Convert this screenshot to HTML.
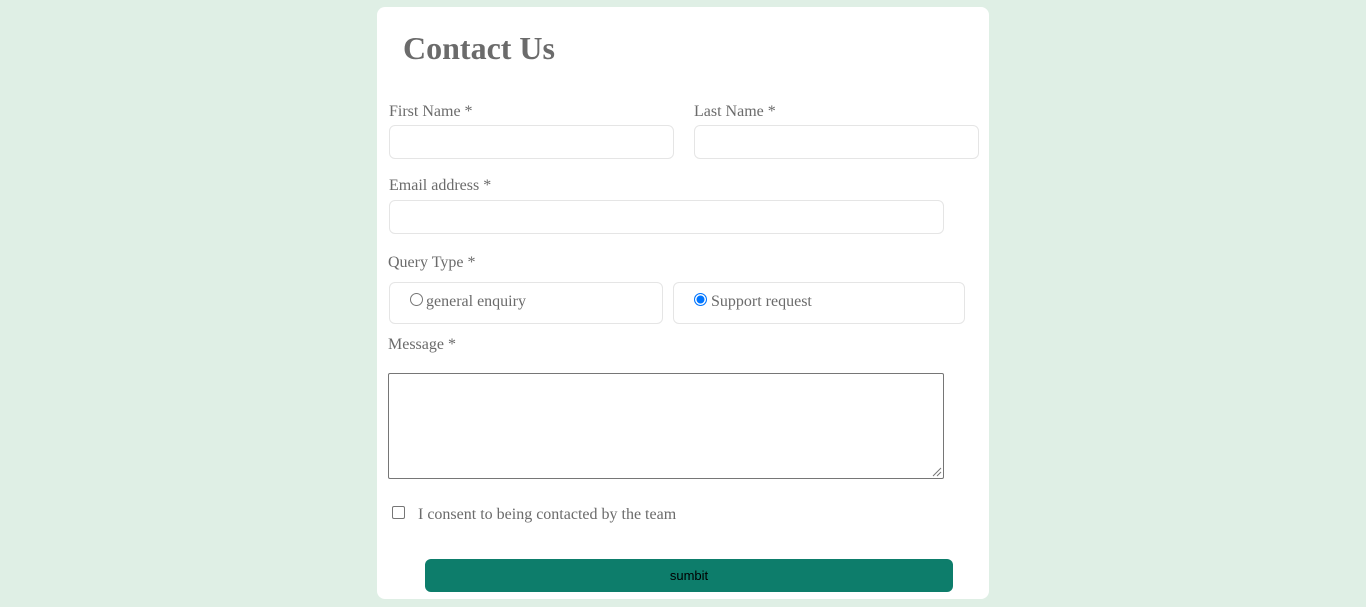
<!DOCTYPE html>
<html><head><meta charset="utf-8"><style>
html,body{margin:0;padding:0;width:1366px;height:607px;background:#dfefe5;overflow:hidden;font-family:"Liberation Serif",serif;color:#6b6b6b}
.card{position:absolute;left:377px;top:7px;width:612px;height:592px;background:#fff;border-radius:8px}
.a{position:absolute}
h1{position:absolute;left:403px;top:30px;margin:0;font-size:32px;font-weight:bold;color:#6b6b6b;line-height:36px}
.l{position:absolute;font-size:16px;line-height:18px}
.in{position:absolute;border:1px solid #e5e5e5;border-radius:6px;background:#fff;box-sizing:border-box}
.radio{position:absolute;width:13px;height:13px;border-radius:50%;box-sizing:border-box}
</style></head><body>
<div class="card"></div>
<h1>Contact Us</h1>
<div class="l" style="left:389px;top:103px">First Name *</div>
<div class="l" style="left:694px;top:103px">Last Name *</div>
<div class="in" style="left:389px;top:125px;width:285px;height:34px"></div>
<div class="in" style="left:694px;top:125px;width:285px;height:34px"></div>
<div class="l" style="left:389px;top:177px">Email address *</div>
<div class="in" style="left:389px;top:200px;width:555px;height:34px"></div>
<div class="l" style="left:388px;top:254px">Query Type *</div>
<div class="in" style="left:389px;top:282px;width:274px;height:42px"></div>
<div class="in" style="left:673px;top:282px;width:292px;height:42px"></div>
<div class="radio" style="left:410px;top:293px;border:1px solid #767676"></div>
<div class="l" style="left:426px;top:293px">general enquiry</div>
<div class="radio" style="left:694px;top:293px;border:1px solid #0075ff;background:#0075ff;box-shadow:inset 0 0 0 1.5px #fff"></div>
<div class="l" style="left:711px;top:293px">Support request</div>
<div class="l" style="left:388px;top:336px">Message *</div>
<div class="a" style="left:388px;top:373px;width:556px;height:106px;border:1px solid #767676;box-sizing:border-box;border-radius:2px"></div>
<svg class="a" style="left:932px;top:467px" width="10" height="10"><path d="M1 9L9 1M5 9L9 5" stroke="#777" stroke-width="1"/></svg>
<div class="a" style="left:392px;top:506px;width:13px;height:13px;border:1px solid #767676;border-radius:2px;box-sizing:border-box"></div>
<div class="l" style="left:418px;top:506px">I consent to being contacted by the team</div>
<div class="a" style="left:425px;top:559px;width:528px;height:33px;background:#0d7d6b;border-radius:6px;font-family:'Liberation Sans',sans-serif;font-size:13px;color:#000;text-align:center;line-height:33px">sumbit</div>
</body></html>
